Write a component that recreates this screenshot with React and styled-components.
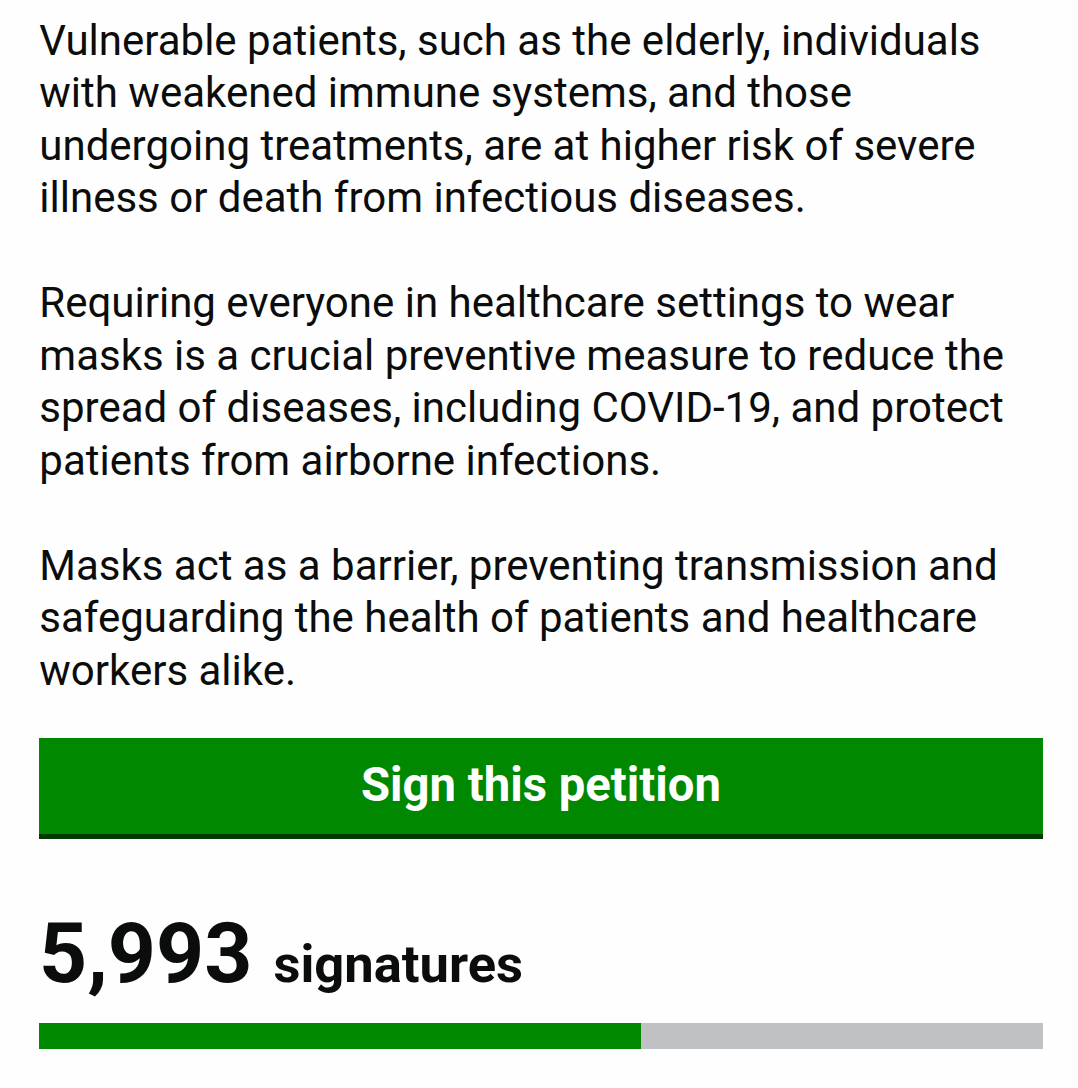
import styled, { createGlobalStyle } from 'styled-components';

const GlobalStyle = createGlobalStyle`
  body {
    margin: 0;
    background-color: #fefefe;
    color: #0b0c0c;
    font-family: Roboto, 'Liberation Sans', sans-serif;
  }
`;

const Page = styled.main`
  box-sizing: border-box;
  height: 1088px;
  padding: 14.75px 35px 0 39px;
  overflow: hidden;
`;

const Paragraph = styled.p`
  margin: 0 0 52.5px;
  padding-left: 0.3px;
  font-size: 42px;
  line-height: 52.5px;
  white-space: nowrap;
`;

const SignButton = styled.button`
  display: block;
  box-sizing: border-box;
  width: 100%;
  height: 101px;
  margin-top: -11.75px;
  padding: 0 0 8px;
  border: none;
  background-color: #008800;
  box-shadow: inset 0 -5px 0 #003a00;
  color: #fff;
  font-family: inherit;
  font-size: 47.25px;
  font-weight: 700;
  cursor: pointer;
`;

const SignatureCount = styled.p`
  display: flex;
  align-items: baseline;
  gap: 21px;
  margin: 67px 0 0;
  height: 117px;
  font-weight: 700;
`;

const Count = styled.span`
  font-size: 84px;
  line-height: 96px;
`;

const CountLabel = styled.span`
  font-size: 52.5px;
`;

const ProgressBar = styled.div`
  height: 26px;
  background-color: #bfc1c3;
`;

const Progress = styled.div`
  height: 100%;
  background-color: #008800;
`;

const paragraphs = [
  [
    'Vulnerable patients, such as the elderly, individuals',
    'with weakened immune systems, and those',
    'undergoing treatments, are at higher risk of severe',
    'illness or death from infectious diseases.'
  ],
  [
    'Requiring everyone in healthcare settings to wear',
    'masks is a crucial preventive measure to reduce the',
    'spread of diseases, including COVID-19, and protect',
    'patients from airborne infections.'
  ],
  [
    'Masks act as a barrier, preventing transmission and',
    'safeguarding the health of patients and healthcare',
    'workers alike.'
  ]
];

const signatures = 5993;
const target = 10000;

function App() {
  return (
    <>
      <GlobalStyle />
      <Page>
        {paragraphs.map((lines) => (
          <Paragraph key={lines[0]}>
            {lines.map((line) => (
              <span key={line}>
                {line}
                <br />
              </span>
            ))}
          </Paragraph>
        ))}
        <SignButton type="button">Sign this petition</SignButton>
        <SignatureCount>
          <Count>{signatures.toLocaleString('en-GB')}</Count>
          <CountLabel>signatures</CountLabel>
        </SignatureCount>
        <ProgressBar>
          <Progress style={{ width: `${(signatures / target) * 100}%` }} />
        </ProgressBar>
      </Page>
    </>
  );
}

export default App;
